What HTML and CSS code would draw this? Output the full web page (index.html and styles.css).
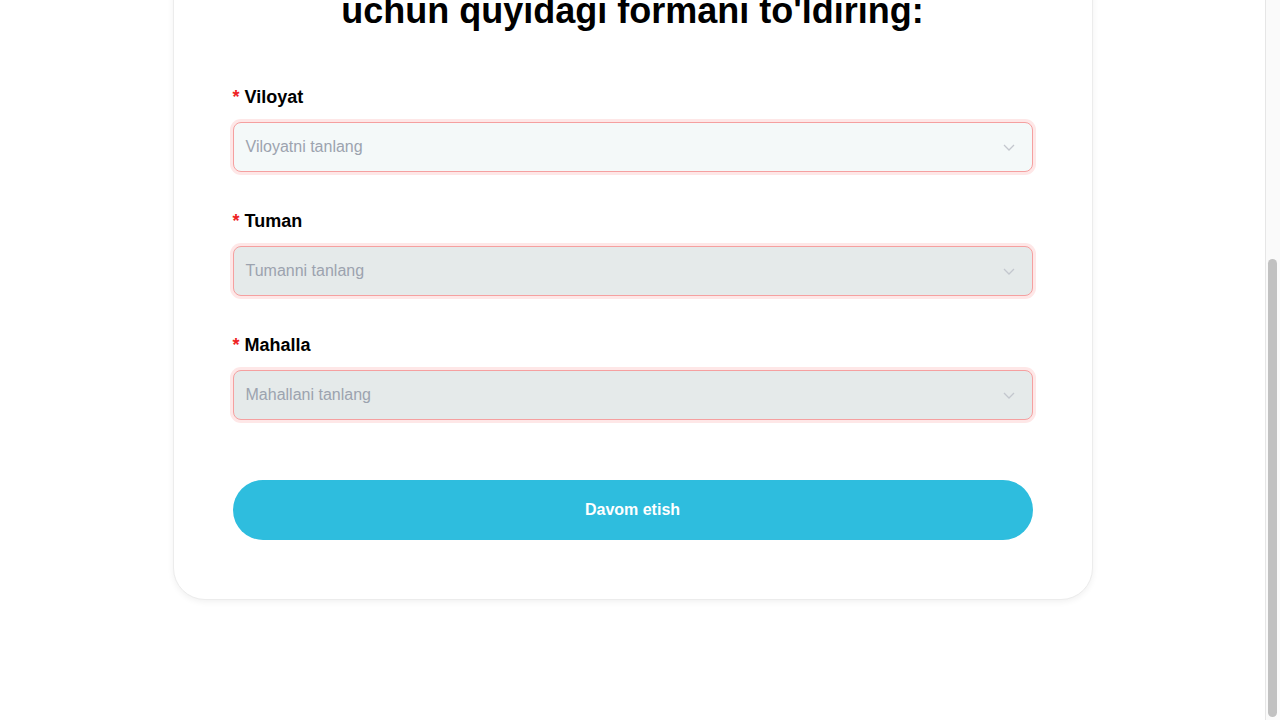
FILE: index.html
```html
<!DOCTYPE html>
<html lang="uz">
<head>
<meta charset="utf-8">
<title>Forma</title>
<link rel="stylesheet" href="styles.css">
</head>
<body>
<div class="page">
  <div class="card">
    <h1 class="title">Tanlovda ishtirok etish<br>uchun quyidagi formani to'ldiring:</h1>
    <form class="form">
      <div class="field">
        <label class="label"><span class="req">*</span> Viloyat</label>
        <div class="select">
          <span class="placeholder">Viloyatni tanlang</span>
          <svg class="chev" width="12" height="7" viewBox="0 0 12 7"><path d="M1 1l5 5 5-5" fill="none" stroke="#c3c7ce" stroke-width="1.3"/></svg>
        </div>
      </div>
      <div class="field">
        <label class="label"><span class="req">*</span> Tuman</label>
        <div class="select disabled">
          <span class="placeholder">Tumanni tanlang</span>
          <svg class="chev" width="12" height="7" viewBox="0 0 12 7"><path d="M1 1l5 5 5-5" fill="none" stroke="#c3c7ce" stroke-width="1.3"/></svg>
        </div>
      </div>
      <div class="field">
        <label class="label"><span class="req">*</span> Mahalla</label>
        <div class="select disabled">
          <span class="placeholder">Mahallani tanlang</span>
          <svg class="chev" width="12" height="7" viewBox="0 0 12 7"><path d="M1 1l5 5 5-5" fill="none" stroke="#c3c7ce" stroke-width="1.3"/></svg>
        </div>
      </div>
      <button type="button" class="btn">Davom etish</button>
    </form>
  </div>
</div>
<div class="scrollbar" aria-hidden="true"><div class="thumb"></div></div>
<script src="script.js"></script>
</body>
</html>
```

FILE: styles.css
```css
body {
  margin: 0 15px 0 0;
  background: #ffffff;
  font-family: "Liberation Sans", Arial, sans-serif;
  color: #000;
}
.page {
  display: flex;
  justify-content: center;
  padding: 120px 0 120px;
}
.card {
  width: 920px;
  box-sizing: border-box;
  background: #fff;
  border: 1px solid #ececec;
  border-radius: 32px;
  box-shadow: 0 2px 6px rgba(0,0,0,0.06);
  padding: 60px 59px 59px;
}
.title {
  margin: 0 0 51px;
  text-align: center;
  font-size: 36px;
  line-height: 46px;
  font-weight: 700;
}
.form { display: flex; flex-direction: column; }
.field { margin-bottom: 37px; }
.label {
  display: block;
  font-size: 18px;
  line-height: 24px;
  font-weight: 700;
  margin-bottom: 13px;
}
.req { color: #ee2222; font-weight: 700; }
.select {
  height: 50px;
  box-sizing: border-box;
  border: 1px solid #f5a0a0;
  border-radius: 8px;
  box-shadow: 0 0 0 3px #fee7e7;
  background: #f4f9f9;
  display: flex;
  align-items: center;
  justify-content: space-between;
  padding: 0 17px 0 12px;
}
.select.disabled { background: #e5eaea; }
.placeholder { font-size: 16px; color: #9ca3af; }
.btn {
  margin-top: 23px;
  height: 60px;
  border: none;
  border-radius: 30px;
  background: #2ebdde;
  color: #fff;
  font-family: "Liberation Sans", Arial, sans-serif;
  font-size: 16px;
  font-weight: 700;
  cursor: pointer;
}
.scrollbar {
  position: fixed;
  top: 0;
  right: 0;
  width: 14px;
  height: 100%;
  background: #fafafa;
  border-left: 1px solid #e6e6e6;
}
.thumb {
  position: absolute;
  left: 2px;
  top: 259px;
  width: 9px;
  height: 458px;
  border-radius: 5px;
  background: #c1c1c1;
}
```

FILE: script.js
```js
window.scrollTo(0, document.documentElement.scrollHeight);
window.addEventListener('load', function () {
  window.scrollTo(0, document.documentElement.scrollHeight);
});
```
